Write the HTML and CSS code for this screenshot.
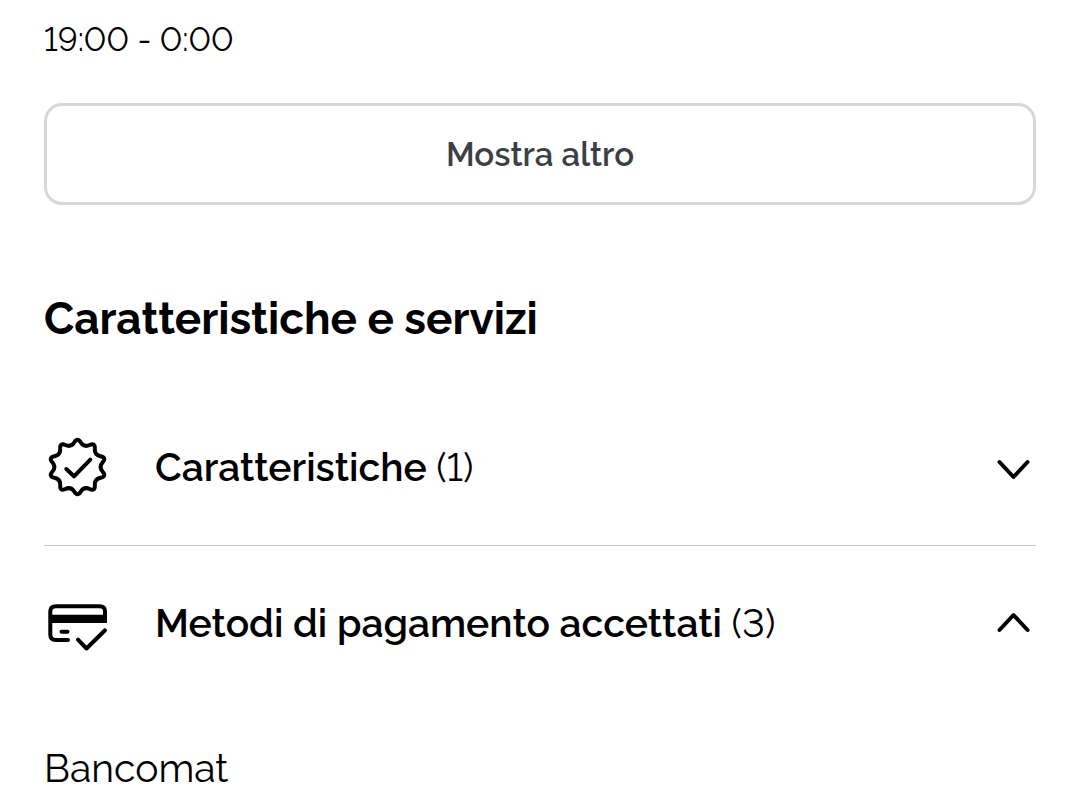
FILE: index.html
```html
<!DOCTYPE html>
<html lang="it">
<head>
<meta charset="utf-8">
<meta name="viewport" content="width=device-width, initial-scale=1">
<title>Caratteristiche e servizi</title>
<link rel="stylesheet" href="styles.css">
</head>
<body>
<main class="page">
  <p class="hours">19:00 - 0:00</p>
  <button class="more" type="button">Mostra altro</button>
  <h2 class="title">Caratteristiche e servizi</h2>
  <section class="group">
    <button class="row" type="button" aria-expanded="false">
      <svg class="icon" viewBox="0 0 66 66" aria-hidden="true">
        <path d="M30.200 8.500Q33.500 3 36.800 8.500Q40 13.500 45.700 11Q51.200 8.500 50.800 14.500Q50.200 20.800 56.500 22.200Q62.700 23.600 58.700 28.200Q54.500 33 58.700 37.800Q62.700 42.400 56.500 43.800Q50.200 45.200 50.800 51.500Q51.200 57.500 45.700 55Q40 52.500 36.800 57.500Q33.500 63 30.200 57.500Q27 52.500 21.300 55Q15.800 57.500 16.200 51.500Q16.800 45.200 10.500 43.800Q4.300 42.400 8.300 37.800Q12.500 33 8.300 28.200Q4.300 23.600 10.500 22.200Q16.800 20.800 16.200 14.500Q15.800 8.500 21.300 11Q27 13.500 30.200 8.500Z"/>
        <path d="M22.300 35L30 42.300L46.300 25.700"/>
      </svg>
      <span class="label">Caratteristiche <span class="count">(1)</span></span>
      <svg class="chevron" viewBox="0 0 44 44" aria-hidden="true"><path d="M7.500 17L21.500 32L35.500 17"/></svg>
    </button>
  </section>
  <section class="group">
    <button class="row" type="button" aria-expanded="true">
      <svg class="icon" viewBox="0 0 66 66" aria-hidden="true">
        <path d="M24 50H12Q6.300 50 6.300 44.500V21.500Q6.300 16.300 12 16.300H55.500Q61 16.300 61 21.500V30"/>
        <path class="band" d="M5 24.700H63V33H5Z"/>
        <path d="M17.500 41.700H23.500M34 49.700L42.500 58.500L61 40.300"/>
      </svg>
      <span class="label">Metodi di pagamento accettati <span class="count">(3)</span></span>
      <svg class="chevron" viewBox="0 0 44 44" aria-hidden="true"><path d="M7.500 29L21.500 14L35.500 29"/></svg>
    </button>
    <p class="item">Bancomat</p>
  </section>
</main>
</body>
</html>
```
FILE: styles.css
```css
* { box-sizing: border-box; }
body {
  margin: 0;
  background: #fff;
  color: #000;
  font-family: Raleway, Lato, sans-serif;
  font-variant-numeric: lining-nums;
}
.page { padding: 20px 44px 0; }
.hours {
  margin: 0 0 43px;
  font-size: 33px;
  line-height: 40px;
}
.more {
  display: block;
  width: 100%;
  padding: 29px 28px 27px;
  border: 3px solid #d6d7db;
  border-radius: 18px;
  background: #fff;
  color: #3d3f47;
  font-family: inherit;
  font-size: 33px;
  font-weight: 600;
  line-height: 40px;
}
.title {
  margin: 84px 0 41px;
  font-size: 44px;
  line-height: 60px;
  font-weight: 700;
}
.group + .group { border-top: 1px solid #c8c8c8; }
.row {
  display: flex;
  align-items: center;
  width: 100%;
  padding: 44px 0 45px;
  border: 0;
  background: none;
  color: inherit;
  font-family: inherit;
  font-size: 39px;
  font-weight: 600;
  font-variant-numeric: inherit;
  line-height: 66px;
  text-align: left;
}
.icon { width: 66px; height: 66px; margin-right: 45px; }
.label { flex: 1; }
.count { font-weight: 400; }
.chevron { width: 44px; height: 44px; }
.icon, .chevron {
  flex: none;
  fill: none;
  stroke: #000;
  stroke-width: 4;
  stroke-linecap: round;
  stroke-linejoin: round;
}
.band { fill: #000; stroke: none; }
.item {
  margin: 37px 0 0;
  font-size: 39px;
  line-height: 60px;
}
```
